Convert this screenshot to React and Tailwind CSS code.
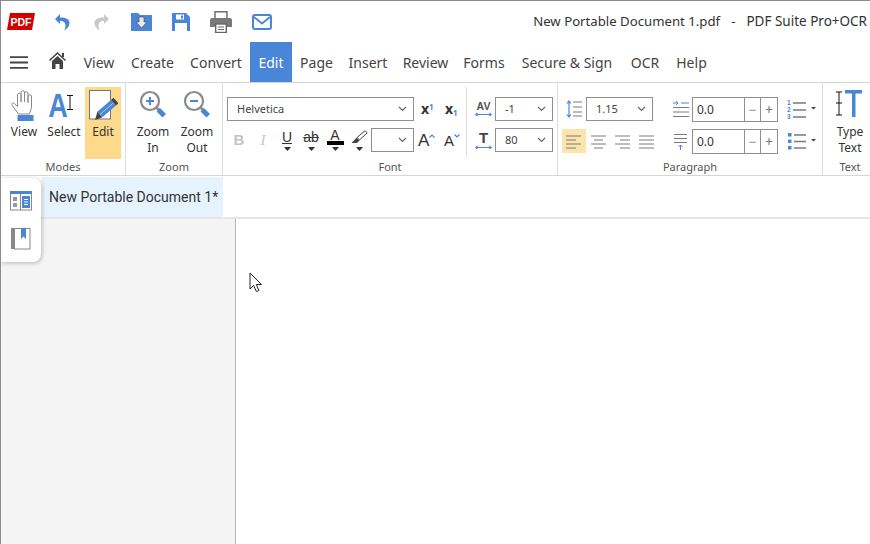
import React from "react";

const B = "#4a86d8";
const G = "#7a7a7a";

function Caret({ className = "" }) {
  return (
    <svg width="7" height="4" viewBox="0 0 7 4" className={className}>
      <path d="M0 0h7L3.500 4z" fill="#333" />
    </svg>
  );
}
function Chevron() {
  return (
    <svg width="9" height="6" viewBox="0 0 9 6">
      <path d="M1 1l3.500 3.500L8 1" fill="none" stroke="#666" strokeWidth="1.200" />
    </svg>
  );
}
function BlueRule() {
  return (
    <svg width="17" height="5" viewBox="0 0 17 5" className="block">
      <path d="M1 2.500h15M2.500 .8L.8 2.500l1.700 1.700M14.500 .8l1.700 1.700-1.700 1.700" fill="none" stroke={B} strokeWidth="1.100" />
    </svg>
  );
}
function Select({ w, children }) {
  return (
    <div className={`${w} h-[24px] text-[#444] border border-[#8f8f8f] flex items-center justify-between pl-[9px] pr-[6px] text-[11px] shrink-0`}>
      <span>{children}</span>
      <Chevron />
    </div>
  );
}
function Lines({ rows, w = 18 }) {
  return (
    <svg width={w} height="18" viewBox={`0 0 ${w} 18`}>
      {rows.map(([x1, x2, y], i) => (
        <line key={i} x1={x1} x2={x2} y1={y} y2={y} stroke={G} strokeWidth="1" />
      ))}
    </svg>
  );
}

function BigButton({ icon, label, active, w }) {
  return (
    <div className={`${w} h-[72px] flex flex-col items-center text-[12px] leading-[15.500px] text-[#333] ${active ? "bg-[#fdd98c]" : ""}`}>
      <div className="h-[36px] flex items-center justify-center">{icon}</div>
      <div className="text-center mt-[1px]">{label}</div>
    </div>
  );
}

function Hand() {
  return (
    <svg width="24" height="31" viewBox="0 0 24 31" className="-ml-[2px]">
      <path d="M7.500 24L1.200 15.500C0 13.500 2 12 3.500 13.500L6.500 16.500V4.500C6.500 2.800 10 2.800 10 4.500V12V2C10 .4 13.500 .4 13.500 2V12V3C13.500 1.500 17 1.500 17 3V12.500V6C17 4.500 20.500 4.500 20.500 6V17.500L18.500 24z" fill="#fff" stroke="#8a8a8a" strokeWidth="1" />
      <rect x="6.500" y="25" width="16" height="6" fill={B} />
    </svg>
  );
}
function SelectIcon() {
  return (
    <span className="relative w-[30px] h-[26px] block mt-[1px]">
      <span className="font-['Liberation_Sans',sans-serif] font-bold text-[33px] leading-[26px] text-[#4a86d8] block w-[24px] scale-x-[0.82] -ml-[3px]">A</span>
      <svg width="8" height="15" viewBox="0 0 8 15" className="absolute right-[5px] top-[2px]">
        <path d="M1 .5h6M4 .5v14M1 14.500h6" stroke="#111" strokeWidth="1" fill="none" />
      </svg>
    </span>
  );
}
function EditIcon() {
  return (
    <svg width="30" height="34" viewBox="0 0 30 34">
      <rect x="1.500" y="2.500" width="21" height="28.500" fill="#fff" stroke="#777" strokeWidth="1" />
      <path d="M9.500 23.500L23 12l5 5.500L14 29.500z" fill={B} />
      <path d="M12 26.500L25.500 14.800" stroke="#a9c8f0" strokeWidth="1" />
      <path d="M23 12l2.500-2.200 5 5.500-2.500 2.200z" fill="#444" />
      <path d="M7 32l2.500-8.500L14 29.500z" fill="#444" />
    </svg>
  );
}
function ZoomIcon({ plus }) {
  return (
    <svg width="28" height="30" viewBox="0 0 28 30">
      <circle cx="11" cy="11" r="9" fill="#fff" stroke="#8a8a8a" strokeWidth="2.200" />
      <path d="M7 11h8" stroke={B} strokeWidth="2" />
      {plus && <path d="M11 7v8" stroke={B} strokeWidth="2" />}
      <path d="M17.500 17.500l3 3" stroke="#8a8a8a" strokeWidth="2.500" />
      <path d="M21 18l6 6-3.500 3.500-6-6z" fill={B} />
    </svg>
  );
}
function Tool({ children }) {
  return <div className="w-[24px] flex flex-col items-center justify-center">{children}</div>;
}

function Group({ w, label, children, border = true, labelClass = "" }) {
  return (
    <div className={`${w} h-[92px] shrink-0 flex flex-col ${border ? "border-r border-[#dcdcdc]" : ""}`}>
      <div className="h-[76px] pt-[4px] flex">{children}</div>
      <div className={`text-center text-[11px] leading-[14px] text-[#555] mt-[1px] ${labelClass}`}>{label}</div>
    </div>
  );
}

function NumBox() {
  return (
    <div className="flex h-[25px] w-[86px] border border-[#8f8f8f] text-[12px] shrink-0">
      <span className="flex-1 flex items-center pl-[4px]">0.0</span>
      <span className="w-[16px] border-l border-[#8f8f8f] flex items-center justify-center text-[14px] text-[#999]">−</span>
      <span className="w-[17px] border-l border-[#8f8f8f] flex items-center justify-center text-[14px] text-[#777]">+</span>
    </div>
  );
}

const MENU = [
  ["View", "w-[48px]"],
  ["Create", "w-[59px]"],
  ["Convert", "w-[68px]"],
  ["Edit", "w-[42px]"],
  ["Page", "w-[49px]"],
  ["Insert", "w-[54px]"],
  ["Review", "w-[61px]"],
  ["Forms", "w-[56px]"],
  ["Secure & Sign", "w-[110px]"],
  ["OCR", "w-[46px]"],
  ["Help", "w-[47px]"],
];

export default function App() {
  return (
    <div className="w-[870px] h-[544px] overflow-hidden bg-white border-t border-l border-[#8c8c8c] relative flex flex-col font-['Noto_Sans','Open_Sans',sans-serif] text-[#333]">
      {/* title bar */}
      <div className="h-[41px] shrink-0 flex items-center pl-[6px] pr-[3px]">
        <svg width="28" height="17" viewBox="0 0 28 17" className="mr-[19px]">
          <path d="M3 0h25l-3 17H0z" fill="#d40000" />
          <text x="14" y="12.500" textAnchor="middle" fill="#fff" fontSize="10.500" fontWeight="700" fontFamily="Liberation Sans">PDF</text>
        </svg>
        <svg width="16" height="18" viewBox="0 0 16 18" className="mr-[24px]">
          <path d="M6 1L1 6l5 5V8c4 0 5.500 2 5.500 5 0 1.500-.5 3-1.500 4.500 3.500-2 5.500-4.500 5.500-7.500C15.500 6 11 4.300 6 4.500z" fill={B} />
        </svg>
        <svg width="16" height="18" viewBox="0 0 16 18" className="mr-[21px]">
          <path d="M10 1l5 5-5 5V8C6 8 4.500 10 4.500 13c0 1.500.5 3 1.500 4.500C2.500 15.500.5 13 .5 10 .5 6 5 4.300 10 4.500z" fill="#c9c9c9" />
        </svg>
        <svg width="21" height="18" viewBox="0 0 21 18" className="mr-[20px]">
          <path d="M0 0h7l2 2h12v16H0z" fill={B} />
          <path d="M8 4h5v5h3l-5.500 6L5 9h3z" fill="#e8e8e8" stroke="#555" strokeWidth=".7" />
        </svg>
        <svg width="18" height="18" viewBox="0 0 18 18" className="mr-[20px]">
          <path d="M0 0h14l4 4v14H0z" fill={B} />
          <rect x="4" y="1.500" width="8" height="5" fill="#fff" />
          <rect x="9" y="2.500" width="2" height="3" fill={B} />
          <rect x="3" y="10" width="12" height="8" fill="#fff" />
        </svg>
        <svg width="22" height="22" viewBox="0 0 22 22" className="mr-[20px]">
          <rect x="5" y="0.800" width="12" height="7" fill="#fff" stroke="#666" strokeWidth="1.400" />
          <path d="M2 7h18a2 2 0 012 2v7h-5v-3H5v3H0V9a2 2 0 012-2z" fill="#7a7a7a" />
          <rect x="5.700" y="13" width="10.600" height="8.500" fill="#fff" stroke="#666" strokeWidth="1.400" />
          <path d="M8 16h6M8 18.500h6" stroke="#666" />
        </svg>
        <svg width="20" height="16" viewBox="0 0 20 16">
          <rect x="1" y="1" width="18" height="14" rx="2" fill="#fff" stroke={B} strokeWidth="2" />
          <path d="M2 3l8 6.500L18 3" fill="none" stroke={B} strokeWidth="1.800" />
        </svg>
        <div className="ml-auto text-[13.200px] whitespace-pre text-[#333] flex items-baseline">
          <span>New Portable Document 1.pdf</span>
          <span className="ml-[11px]">-</span>
          <span className="ml-[11px] text-[13.500px]">PDF Suite Pro+OCR</span>
        </div>
      </div>

      {/* menu bar */}
      <div className="h-[41px] shrink-0 flex items-stretch border-b border-[#d6d6d6] pl-[9px]">
        <svg width="18" height="13" viewBox="0 0 18 13" className="self-center mr-[21px]">
          <path d="M0 1.200h18M0 6.500h18M0 11.800h18" stroke="#444" strokeWidth="1.800" />
        </svg>
        <svg width="17" height="17" viewBox="0 0 17 17" className="self-center -mt-[4px] mr-[9px]">
          <path d="M8.500 0L17 8l-1 1-7.500-7L1 9 0 8z" fill="#444" />
          <path d="M3 9l5.500-5L14 9v8h-3.500v-5h-4v5H3z" fill="#444" />
          <rect x="13" y="1" width="2" height="4" fill="#444" />
        </svg>
        {MENU.map(([m, w]) => (
          <div
            key={m}
            className={`${w} shrink-0 flex items-center justify-center whitespace-nowrap text-[14px] ${m === "Edit" ? "bg-[#4a86d8] text-white" : "text-[#444]"}`}
          >
            {m}
          </div>
        ))}
      </div>

      {/* ribbon */}
      <div className="h-[93px] shrink-0 flex border-b border-[#d6d6d6]">
        <Group w="w-[125px]" label="Modes">
          <div className="flex pl-[4px]">
            <BigButton w="w-[38px]" icon={<Hand />} label="View" />
            <BigButton w="w-[42px]" icon={<SelectIcon />} label="Select" />
            <BigButton w="w-[36px]" active icon={<EditIcon />} label="Edit" />
          </div>
        </Group>
        <Group w="w-[97px]" label="Zoom">
          <div className="flex pl-[5px]">
            <BigButton w="w-[44px]" icon={<ZoomIcon plus />} label={<>Zoom<br />In</>} />
            <BigButton w="w-[44px]" icon={<ZoomIcon />} label={<>Zoom<br />Out</>} />
          </div>
        </Group>

        {/* Font */}
        <Group w="w-[335px]" label="Font">
          <div className="w-[244px] h-[70px] border-r border-[#dcdcdc] pl-[4px] pt-[10px] flex flex-col gap-[7px]">
            <div className="flex items-center h-[24px]">
              <Select w="w-[187px]">Helvetica</Select>
              <span className="ml-[7px] w-[15px] font-bold text-[14px] leading-none text-[#333]">x<sup className="text-[8px] text-[#4a86d8]">1</sup></span>
              <span className="ml-[9px] w-[15px] font-bold text-[14px] leading-none text-[#333]">x<sub className="text-[8px] text-[#4a86d8]">1</sub></span>
            </div>
            <div className="flex items-center h-[24px]">
              <div className="w-[144px] flex items-center font-['Liberation_Sans',sans-serif]">
                <Tool><span className="font-bold text-[15px] text-[#c4c4c4]">B</span></Tool>
                <Tool><span className="italic text-[15px] text-[#c4c4c4] font-['Liberation_Serif',serif]">I</span></Tool>
                <Tool>
                  <span className="text-[14px] leading-[14px] underline">U</span>
                  <Caret className="mt-[3px]" />
                </Tool>
                <Tool>
                  <span className="text-[14px] leading-[14px] line-through">ab</span>
                  <Caret className="mt-[3px]" />
                </Tool>
                <Tool>
                  <span className="text-[14px] leading-[12px]">A</span>
                  <span className="w-[17px] h-[4px] bg-black" />
                  <Caret className="mt-[2px]" />
                </Tool>
                <Tool>
                  <svg width="17" height="14" viewBox="0 0 17 14">
                    <path d="M14 .8l2.200 2L8.500 10 6 7.500z" fill="#fff" stroke="#444" />
                    <path d="M5.500 7.800l3 2.700-2.500 2.500H.5z" fill="#444" />
                  </svg>
                  <Caret className="mt-[3px]" />
                </Tool>
              </div>
              <Select w="w-[43px]">{""}</Select>
              <span className="ml-[4px] w-[18px] flex items-start">
                <span className="text-[17px] leading-none font-['Liberation_Sans',sans-serif]">A</span>
                <svg width="6" height="4" viewBox="0 0 6 4" className="mt-[2px]"><path d="M.5 3.500L3 1l2.500 2.500" fill="none" stroke={B} strokeWidth="1.200" /></svg>
              </span>
              <span className="ml-[8px] w-[18px] flex items-start">
                <span className="text-[15px] leading-none font-['Liberation_Sans',sans-serif]">A</span>
                <svg width="6" height="4" viewBox="0 0 6 4" className="mt-[1px]"><path d="M.5 .5L3 3l2.500-2.500" fill="none" stroke={B} strokeWidth="1.200" /></svg>
              </span>
            </div>
          </div>
          <div className="flex-1 pl-[8px] pt-[10px] flex flex-col gap-[7px]">
            <div className="flex items-center h-[24px]">
              <div className="w-[20px] flex flex-col items-start">
                <span className="w-[17px] text-center font-bold text-[10.500px] leading-[11px] text-[#555] font-['Liberation_Sans',sans-serif]">AV</span>
                <BlueRule />
              </div>
              <Select w="w-[58px]">-1</Select>
            </div>
            <div className="flex items-center h-[24px]">
              <div className="w-[20px] flex flex-col items-start">
                <span className="w-[17px] text-center font-bold text-[15px] leading-[14px] text-[#444] font-['Liberation_Sans',sans-serif]">T</span>
                <BlueRule />
              </div>
              <Select w="w-[58px]">80</Select>
            </div>
          </div>
        </Group>

        {/* Paragraph */}
        <Group w="w-[265px]" label="Paragraph">
          <div className="w-[100px] pt-[10px] pl-[4px] flex flex-col gap-[8px]">
            <div className="flex items-center h-[24px]">
              <div className="w-[24px] flex justify-center">
                <svg width="16" height="18" viewBox="0 0 16 18">
                  <path d="M3 1v16M1 3.500L3 1l2 2.500M1 14.500L3 17l2-2.500" fill="none" stroke={B} strokeWidth="1.200" />
                  <path d="M7 2h9M7 7h9M7 12h9M7 16h9" stroke={G} />
                </svg>
              </div>
              <Select w="w-[67px]">1.15</Select>
            </div>
            <div className="flex items-center h-[24px]">
              {[
                [[2, 17, 4], [2, 12, 8], [2, 17, 12], [2, 12, 16]],
                [[3, 18, 4], [6, 15, 8], [3, 18, 12], [6, 15, 16]],
                [[3, 18, 4], [8, 18, 8], [3, 18, 12], [8, 18, 16]],
                [[3, 18, 4], [3, 18, 8], [3, 18, 12], [3, 18, 16]],
              ].map((r, i) => (
                <div key={i} className={`w-[24px] h-[24px] flex items-center justify-center ${i === 0 ? "bg-[#fde4ac]" : ""}`}>
                  <Lines rows={r} w={20} />
                </div>
              ))}
            </div>
          </div>
          <div className="w-[121px] pt-[10px] pl-[14px] flex flex-col gap-[7px]">
            <div className="flex items-center h-[25px]">
              <svg width="18" height="18" viewBox="0 0 18 18" className="mr-[2px]">
                <path d="M1 2h5M4 0l2 2-2 2" fill="none" stroke={B} />
                <path d="M9 2h8" stroke={B} />
                <path d="M1 6.500h16M1 11h16M1 15.500h16" stroke={G} />
              </svg>
              <NumBox />
            </div>
            <div className="flex items-center h-[25px]">
              <svg width="18" height="18" viewBox="0 0 18 18" className="mr-[2px]">
                <path d="M2 1.500h13M2 5.500h13M2 9.500h13" stroke={G} />
                <path d="M8.500 17v-5M6.500 14l2-2 2 2" fill="none" stroke={B} />
              </svg>
              <NumBox />
            </div>
          </div>
          <div className="pt-[10px] pl-[8px] flex flex-col gap-[8px]">
            <div className="flex items-center h-[24px]">
              <svg width="30" height="20" viewBox="0 0 30 20">
                <text x="0" y="6" fontSize="6.500" fontWeight="700" fill={B} fontFamily="Liberation Sans">1</text>
                <text x="0" y="13" fontSize="6.500" fontWeight="700" fill={B} fontFamily="Liberation Sans">2</text>
                <text x="0" y="20" fontSize="6.500" fontWeight="700" fill={B} fontFamily="Liberation Sans">3</text>
                <path d="M6 4h13M6 11h13M6 18h13" stroke={G} strokeWidth="1.300" />
                <path d="M24 8h5l-2.500 2.500z" fill="#444" />
              </svg>
            </div>
            <div className="flex items-center h-[24px]">
              <svg width="30" height="20" viewBox="0 0 30 20">
                <path d="M1 2h3.500v3.500H1zM1 8.500h3.500V12H1zM1 15h3.500v3.500H1z" fill={B} />
                <path d="M7 4h12M7 10.500h12M7 17h12" stroke={G} strokeWidth="1.300" />
                <path d="M24 8h5l-2.500 2.500z" fill="#444" />
              </svg>
            </div>
          </div>
        </Group>

        {/* Text */}
        <Group w="w-[47px]" label="Text" border={false} labelClass="pl-[7px]">
          <div className="flex flex-col items-center w-full pl-[7px] text-[12px] leading-[15.500px] text-[#333]">
            <svg width="28" height="36" viewBox="0 0 28 36" className="shrink-0 -ml-[3px] mt-[1px]">
              <path d="M1 4h6M4 4v23M1 27h6M1 15h6" stroke="#111" fill="none" />
              <path d="M10 2h17v3.500h-6.500V29H17V5.500h-7z" fill={B} />
            </svg>
            <div className="text-center mt-[0px]">Type<br />Text</div>
          </div>
        </Group>
      </div>

      {/* tab strip */}
      <div className="h-[43px] shrink-0 flex border-b-2 border-[#e6e6e6] pl-[41px] pt-[1px]">
        <div className="w-[181px] bg-[#e6f3ff] flex items-center pl-[7px] text-[14px] text-[#333] font-['Roboto',sans-serif] whitespace-nowrap">
          New Portable Document 1*
        </div>
      </div>

      {/* body */}
      <div className="flex-1 flex">
        <div className="w-[235px] bg-[#f4f4f4] border-r border-[#b5b5b5]" />
        <div className="flex-1 bg-white" />
      </div>

      {/* floating side tools */}
      <div className="absolute left-0 top-[177px] w-[40px] h-[84px] bg-white rounded-r-[8px] shadow-[1px_1px_4px_rgba(0,0,0,0.25)] flex flex-col items-center gap-[16px] pt-[13px]">
        <svg width="22" height="20" viewBox="0 0 22 20">
          <rect x=".5" y=".5" width="21" height="18.500" fill="#fff" stroke="#888" />
          <rect x="0" y="0" width="22" height="3" fill={B} />
          <path d="M10.500 3v16" stroke="#888" />
          <rect x="3" y="6" width="4" height="4" fill="#999" />
          <rect x="3" y="12" width="4" height="4" fill="#999" />
          <rect x="12" y="5" width="8" height="12" fill={B} />
          <path d="M14 8.500h4M14 11h4M14 13.500h4" stroke="#fff" />
        </svg>
        <svg width="20" height="23" viewBox="0 0 20 23">
          <rect x="0" y="1" width="3.500" height="21" fill="#888" />
          <rect x="3.500" y="1.500" width="15.500" height="20.500" fill="#fff" stroke="#888" />
          <path d="M10 1h5v11l-2.500-2.500L10 12z" fill={B} />
        </svg>
      </div>

      {/* mouse cursor */}
      <svg width="14" height="21" viewBox="0 0 14 21" className="absolute left-[248px] top-[271px]">
        <path d="M1 1v16l3.600-3.500L7.300 19.500l2.600-1L7.300 12.500h5.200z" fill="#fff" stroke="#222" strokeWidth="1" />
      </svg>
    </div>
  );
}
